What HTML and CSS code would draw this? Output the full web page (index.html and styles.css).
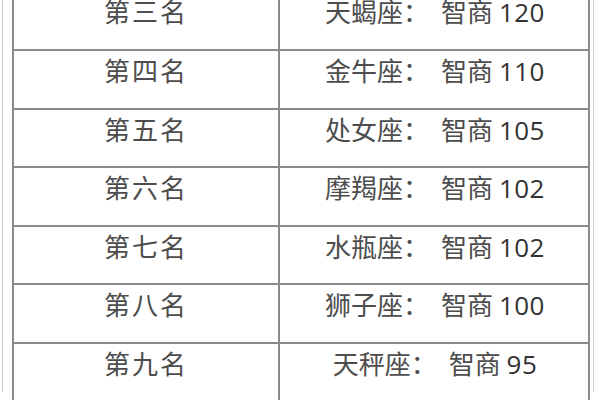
FILE: index.html
```html
<!DOCTYPE html>
<html lang="zh-CN">
<head>
<meta charset="utf-8">
<link rel="stylesheet" href="styles.css">
</head>
<body>
<div class="frame">
  <div class="table">
    <div class="row"><div class="cell rank">第三名</div><div class="cell sign">天蝎座<span class="colon">：</span>智商 <span class="num">120</span></div></div>
    <div class="row"><div class="cell rank">第四名</div><div class="cell sign">金牛座<span class="colon">：</span>智商 <span class="num">110</span></div></div>
    <div class="row"><div class="cell rank">第五名</div><div class="cell sign">处女座<span class="colon">：</span>智商 <span class="num">105</span></div></div>
    <div class="row"><div class="cell rank">第六名</div><div class="cell sign">摩羯座<span class="colon">：</span>智商 <span class="num">102</span></div></div>
    <div class="row"><div class="cell rank">第七名</div><div class="cell sign">水瓶座<span class="colon">：</span>智商 <span class="num">102</span></div></div>
    <div class="row"><div class="cell rank">第八名</div><div class="cell sign">狮子座<span class="colon">：</span>智商 <span class="num">100</span></div></div>
    <div class="row"><div class="cell rank">第九名</div><div class="cell sign">天秤座<span class="colon">：</span>智商 <span class="num">95</span></div></div>
  </div>
</div>
</body>
</html>
```
FILE: styles.css
```css
html, body {
  margin: 0;
  padding: 0;
  background: #ffffff;
  overflow: hidden;
  width: 600px;
  height: 400px;
}
.frame {
  box-sizing: border-box;
  margin-left: 2px;
  width: 592px;
  height: 400px;
  border-left: 1px solid #cfcfcf;
  border-right: 1px solid #cfcfcf;
  padding: 0 3px 0 9px;
}
.table {
  margin-top: -7.6px;
  border-left: 2px solid #8a8a8a;
  border-right: 2px solid #8a8a8a;
  display: grid;
  grid-template-columns: 266px 1fr;
  font-family: "Noto Sans CJK SC", "Noto Sans", sans-serif;
  font-size: 26px;
  color: #4d4d4d;
}
.row {
  display: contents;
}
.cell {
  box-sizing: border-box;
  height: 58.6px;
  border-bottom: 2px solid #8a8a8a;
  padding-top: 8px;
  line-height: 22px;
  text-align: center;
  white-space: nowrap;
}
.rank {
  border-right: 2px solid #8a8a8a;
  letter-spacing: 2px;
}
.sign {
  padding-left: 2px;
}
.colon {
  margin-right: 12px;
}
.num {
  font-family: "Open Sans", "Noto Sans", sans-serif;
  color: #333333;
  letter-spacing: 0.5px;
}
```
